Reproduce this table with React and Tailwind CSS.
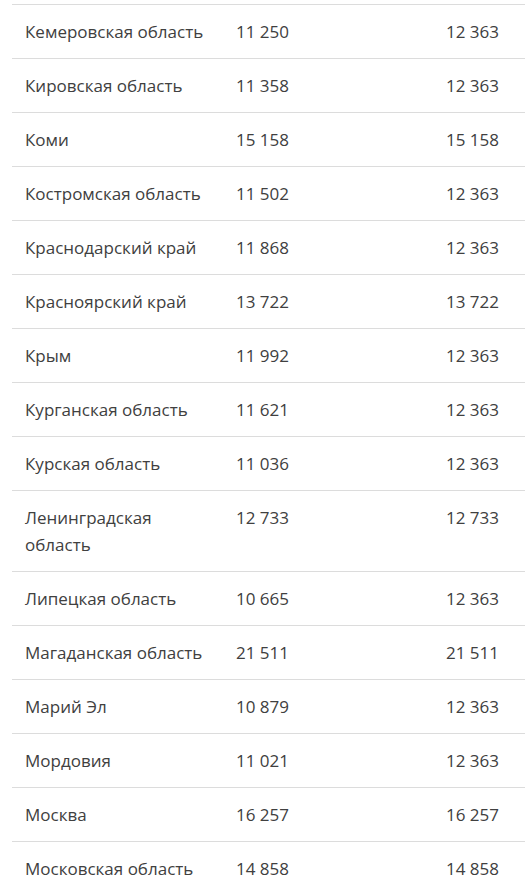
const rows = [
  ['Кемеровская область', '11 250', '12 363'],
  ['Кировская область', '11 358', '12 363'],
  ['Коми', '15 158', '15 158'],
  ['Костромская область', '11 502', '12 363'],
  ['Краснодарский край', '11 868', '12 363'],
  ['Красноярский край', '13 722', '13 722'],
  ['Крым', '11 992', '12 363'],
  ['Курганская область', '11 621', '12 363'],
  ['Курская область', '11 036', '12 363'],
  ['Ленинградская область', '12 733', '12 733'],
  ['Липецкая область', '10 665', '12 363'],
  ['Магаданская область', '21 511', '21 511'],
  ['Марий Эл', '10 879', '12 363'],
  ['Мордовия', '11 021', '12 363'],
  ['Москва', '16 257', '16 257'],
  ['Московская область', '14 858', '14 858'],
];

export default function App() {
  return (
    <div className="min-h-screen bg-white pl-3 pt-1 overflow-hidden" style={{ fontFamily: '"Open Sans", sans-serif' }}>
      <div className="border-t border-[#dcdcdc] text-[17px] leading-[27px] text-[#404040]">
        {rows.map(([region, a, b]) => (
          <div key={region} className="grid grid-cols-[211px_210px_1fr] border-b border-[#dcdcdc]">
            <div className="px-[13px] py-[13px]">{region}</div>
            <div className="px-[13px] py-[13px]">{a}</div>
            <div className="px-[13px] py-[13px]">{b}</div>
          </div>
        ))}
      </div>
    </div>
  );
}
